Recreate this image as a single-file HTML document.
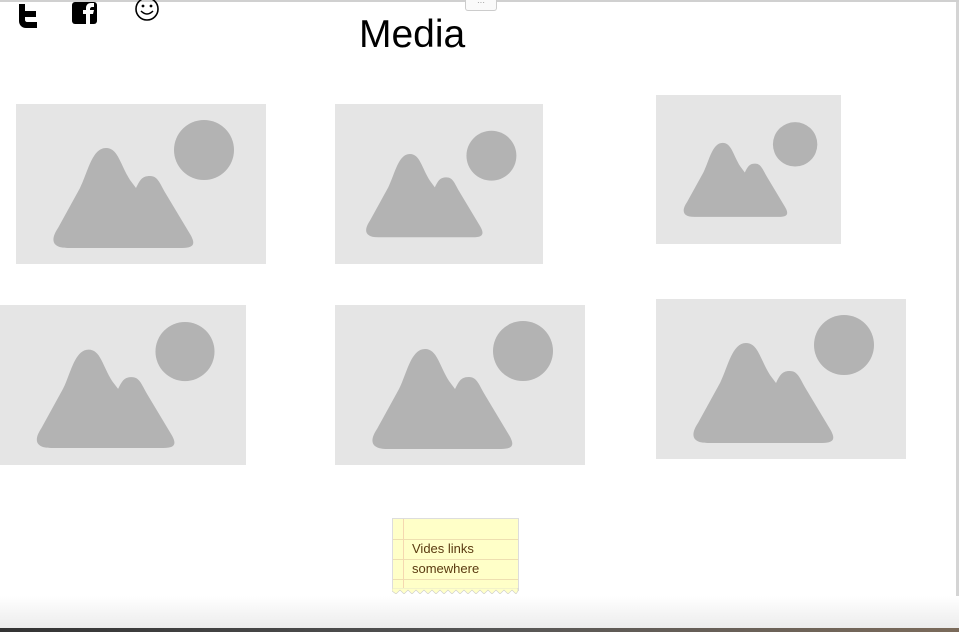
<!DOCTYPE html>
<html><head><style>
body{margin:0;width:959px;height:632px;position:relative;overflow:hidden;background:#fff;font-family:"Liberation Sans",sans-serif}
.ph{position:absolute;background:#e5e5e5}
.ph svg{width:100%;height:100%;display:block}
</style></head><body>
<div style="position:absolute;left:0;top:0;width:959px;height:2px;background:#d0d0d0"></div>
<div style="position:absolute;left:956px;top:2px;width:3px;height:626px;background:#d4d4d4"></div>
<div style="position:absolute;left:465px;top:0;width:30px;height:10px;border:1px solid #ccc;border-top:none;border-radius:0 0 3px 3px;background:#fafafa;font-size:8px;color:#888;text-align:center;line-height:6px">···</div>
<svg style="position:absolute;left:17px;top:4px" width="22" height="24" viewBox="0 0 22 24"><path d="M2 0h6v7h11v6H8v3c0 1 1 2 2 2h10v6H9C5 24 2 21 2 17Z" fill="#000"/></svg>
<svg style="position:absolute;left:72px;top:2px" width="25" height="22" viewBox="0 0 25 22"><rect x="0" y="0" width="25" height="22" rx="3" fill="#000"/><path d="M14 22V12h-3V8h3V6c0-3 2-5 5-5h3v4h-2c-1 0-2 1-2 2v1h4l-1 4h-3v10z" fill="#fff"/></svg>
<svg style="position:absolute;left:134px;top:0" width="26" height="22" viewBox="0 0 26 22"><circle cx="13" cy="9" r="11" fill="none" stroke="#000" stroke-width="1.6"/><circle cx="9" cy="6" r="1.4"/><circle cx="17" cy="6" r="1.4"/><path d="M7 11q6 6 12 0" fill="none" stroke="#000" stroke-width="1.5"/></svg>
<div style="position:absolute;left:359px;top:12px;font-size:39px;color:#000;line-height:46px">Media</div>

<svg width="0" height="0" style="position:absolute"><defs><g id="m"><circle cx="188" cy="46" r="30" fill="#b3b3b3"/><path d="M52,144 C36,144 34,136 42,124 L64,84 C72,68 76,44 90,44 C102,44 104,60 114,76 L120,84 C124,76 126,72 134,72 C142,72 144,80 150,90 L174,130 C180,140 178,144 166,144 Z" fill="#b3b3b3"/></g></defs></svg>

<div class="ph" style="left:16px;top:104px;width:250px;height:160px"><svg viewBox="0 0 250 160"><use href="#m"/></svg></div>
<div class="ph" style="left:335px;top:104px;width:208px;height:160px"><svg viewBox="0 0 250 160"><use href="#m"/></svg></div>
<div class="ph" style="left:656px;top:95px;width:185px;height:149px"><svg viewBox="0 0 250 160"><use href="#m"/></svg></div>
<div class="ph" style="left:0;top:305px;width:246px;height:160px"><svg viewBox="0 0 250 160"><use href="#m"/></svg></div>
<div class="ph" style="left:335px;top:305px;width:250px;height:160px"><svg viewBox="0 0 250 160"><use href="#m"/></svg></div>
<div class="ph" style="left:656px;top:299px;width:250px;height:160px"><svg viewBox="0 0 250 160"><use href="#m"/></svg></div>

<div style="position:absolute;left:392px;top:518px;width:125px;height:72px;background:#ffffc8;border:1px solid #ddd;border-bottom:none;background-image:repeating-linear-gradient(to bottom,transparent 0,transparent 19px,#eedfb0 19px,#eedfb0 20px);background-position:0 1px">
<div style="position:absolute;left:10px;top:0;width:1px;height:72px;background:#f5d8b0"></div>
<div style="position:absolute;left:19px;top:20px;font-size:13px;line-height:20px;color:#5a3a10">Vides links<br>somewhere</div>
</div>
<svg style="position:absolute;left:392px;top:588px" width="127" height="6" viewBox="0 0 127 6"><path d="M0 0V3 L4 6 8 2 12 6 16 2 20 6 24 2 28 6 32 2 36 6 40 2 44 6 48 2 52 6 56 2 60 6 64 2 68 6 72 2 76 6 80 2 84 6 88 2 92 6 96 2 100 6 104 2 108 6 112 2 116 6 120 2 124 6 126 3V0Z" fill="#ffffc8" stroke="#ccc" stroke-width="0.6"/></svg>

<div style="position:absolute;left:0;top:596px;width:959px;height:32px;background:linear-gradient(#fff,#ececec)"></div>
<div style="position:absolute;left:0;top:628px;width:959px;height:4px;background:linear-gradient(90deg,#333,#555 50%,#7a6a5a)"></div>
</body></html>
